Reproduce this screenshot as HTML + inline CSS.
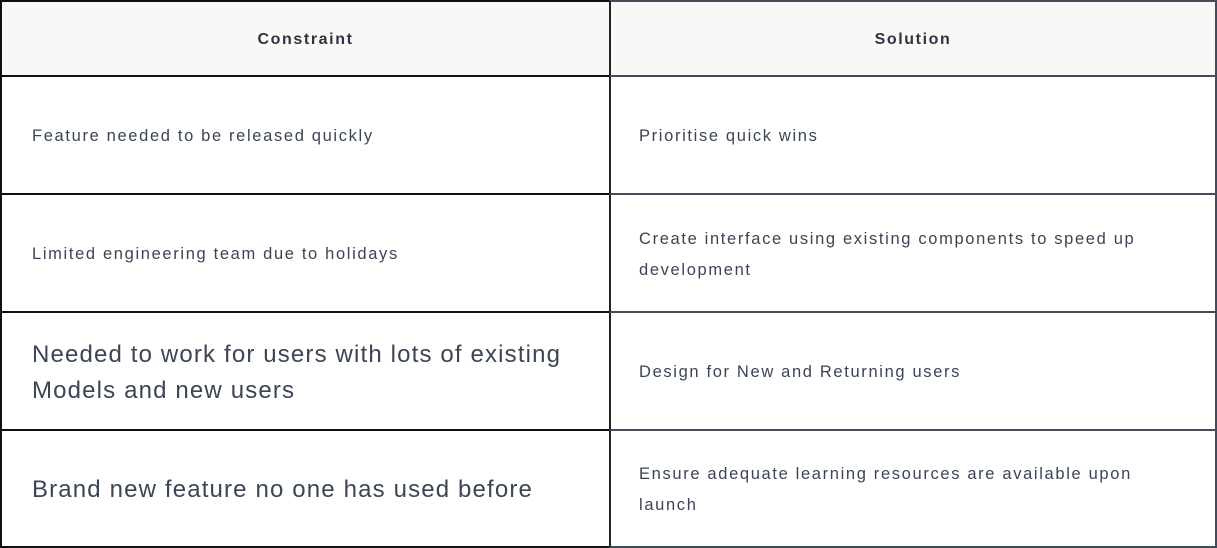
<!DOCTYPE html>
<html><head><style>
body{margin:0;width:1217px;height:548px;background:#fff;font-family:"Liberation Sans",sans-serif;color:#3b4556;position:relative;overflow:hidden}
.c{position:absolute;box-sizing:border-box;display:flex;align-items:center;padding-top:3px}
.l{left:0;width:609px;border:2px solid #111;border-right:none;border-top:none}
.r{left:609px;width:608px;border:2px solid #444c5c;border-top:none}
.h{background:#f9f8f6;justify-content:center;font-weight:bold;font-size:16px;color:#2d3340;letter-spacing:1.6px}
.t{padding-left:30px;font-size:16.5px;line-height:31px;letter-spacing:1.65px}
.r.t{padding-left:28px}
.big{font-size:24px;line-height:36px;letter-spacing:1.15px}
</style></head><body>
<div class="c l h" style="top:0;height:77px;border-top:2px solid #111">Constraint</div>
<div class="c r h" style="top:0;height:77px;border-top:2px solid #444c5c;border-left:2px solid #222">Solution</div>
<div class="c l t" style="top:77px;height:118px">Feature needed to be released quickly</div>
<div class="c r t" style="top:77px;height:118px;border-left:2px solid #222">Prioritise quick wins</div>
<div class="c l t" style="top:195px;height:118px">Limited engineering team due to holidays</div>
<div class="c r t" style="top:195px;height:118px;border-left:2px solid #222">Create interface using existing components to speed up<br>development</div>
<div class="c l t big" style="top:313px;height:118px">Needed to work for users with lots of existing<br>Models and new users</div>
<div class="c r t" style="top:313px;height:118px;border-left:2px solid #222">Design for New and Returning users</div>
<div class="c l t big" style="top:431px;height:117px">Brand new feature no one has used before</div>
<div class="c r t" style="top:431px;height:117px;border-left:2px solid #222">Ensure adequate learning resources are available upon<br>launch</div>
</body></html>
